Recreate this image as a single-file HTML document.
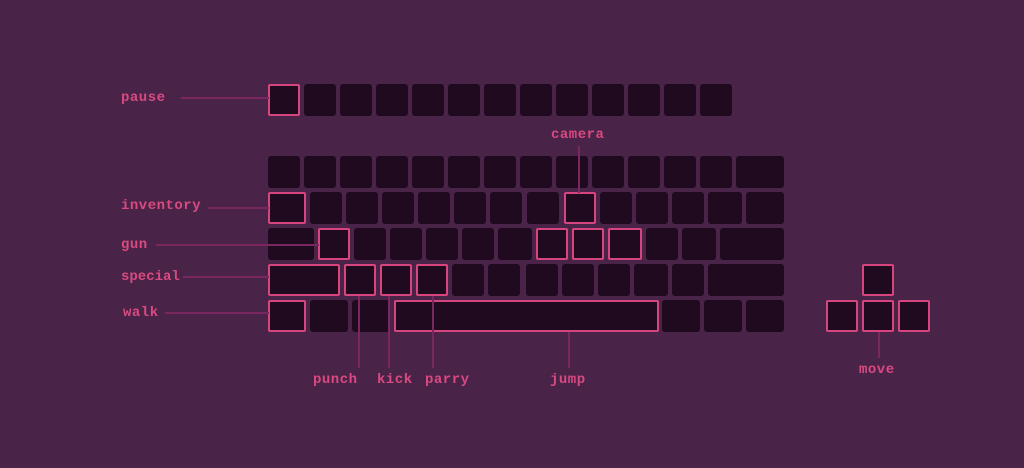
<!DOCTYPE html>
<html><head><meta charset="utf-8"><style>
html,body{margin:0;padding:0}
body{width:1024px;height:468px;background:#4a2349;position:relative;overflow:hidden;font-family:"Liberation Mono","DejaVu Sans Mono",monospace}
.k{position:absolute;height:32px;background:#1f0a20;border-radius:3px;box-sizing:border-box}
.h{border:2px solid #d6457e;border-radius:2px}
.l{position:absolute;background:#7a2760;z-index:2}
.t{position:absolute;color:#d94a80;font-size:14px;line-height:14px;letter-spacing:0.5px;font-weight:bold}
</style></head><body>
<!-- connector lines -->
<div class="l" style="left:181px;top:97px;width:88px;height:2px"></div>
<div class="l" style="left:208px;top:207px;width:61px;height:2px"></div>
<div class="l" style="left:156px;top:244px;width:163px;height:2px"></div>
<div class="l" style="left:183px;top:276px;width:86px;height:2px"></div>
<div class="l" style="left:165px;top:312px;width:104px;height:2px"></div>
<div class="l" style="left:578px;top:146px;width:2px;height:47px"></div>
<div class="l" style="left:358px;top:296px;width:2px;height:72px"></div>
<div class="l" style="left:388px;top:296px;width:2px;height:72px"></div>
<div class="l" style="left:432px;top:296px;width:2px;height:72px"></div>
<div class="l" style="left:568px;top:332px;width:2px;height:36px"></div>
<div class="l" style="left:878px;top:332px;width:2px;height:26px"></div>

<!-- row 0 -->
<div class="k h" style="left:268px;top:84px;width:32px"></div>
<div class="k" style="left:304px;top:84px;width:32px"></div>
<div class="k" style="left:340px;top:84px;width:32px"></div>
<div class="k" style="left:376px;top:84px;width:32px"></div>
<div class="k" style="left:412px;top:84px;width:32px"></div>
<div class="k" style="left:448px;top:84px;width:32px"></div>
<div class="k" style="left:484px;top:84px;width:32px"></div>
<div class="k" style="left:520px;top:84px;width:32px"></div>
<div class="k" style="left:556px;top:84px;width:32px"></div>
<div class="k" style="left:592px;top:84px;width:32px"></div>
<div class="k" style="left:628px;top:84px;width:32px"></div>
<div class="k" style="left:664px;top:84px;width:32px"></div>
<div class="k" style="left:700px;top:84px;width:32px"></div>
<!-- row 1 -->
<div class="k" style="left:268px;top:156px;width:32px"></div>
<div class="k" style="left:304px;top:156px;width:32px"></div>
<div class="k" style="left:340px;top:156px;width:32px"></div>
<div class="k" style="left:376px;top:156px;width:32px"></div>
<div class="k" style="left:412px;top:156px;width:32px"></div>
<div class="k" style="left:448px;top:156px;width:32px"></div>
<div class="k" style="left:484px;top:156px;width:32px"></div>
<div class="k" style="left:520px;top:156px;width:32px"></div>
<div class="k" style="left:556px;top:156px;width:32px"></div>
<div class="k" style="left:592px;top:156px;width:32px"></div>
<div class="k" style="left:628px;top:156px;width:32px"></div>
<div class="k" style="left:664px;top:156px;width:32px"></div>
<div class="k" style="left:700px;top:156px;width:32px"></div>
<div class="k" style="left:736px;top:156px;width:48px"></div>
<!-- row 2 -->
<div class="k h" style="left:268px;top:192px;width:38px"></div>
<div class="k" style="left:310px;top:192px;width:32px"></div>
<div class="k" style="left:346px;top:192px;width:32px"></div>
<div class="k" style="left:382px;top:192px;width:32px"></div>
<div class="k" style="left:418px;top:192px;width:32px"></div>
<div class="k" style="left:454px;top:192px;width:32px"></div>
<div class="k" style="left:490px;top:192px;width:32px"></div>
<div class="k" style="left:527px;top:192px;width:32px"></div>
<div class="k h" style="left:564px;top:192px;width:32px"></div>
<div class="k" style="left:600px;top:192px;width:32px"></div>
<div class="k" style="left:636px;top:192px;width:32px"></div>
<div class="k" style="left:672px;top:192px;width:32px"></div>
<div class="k" style="left:708px;top:192px;width:34px"></div>
<div class="k" style="left:746px;top:192px;width:38px"></div>
<!-- row 3 -->
<div class="k" style="left:268px;top:228px;width:46px"></div>
<div class="k h" style="left:318px;top:228px;width:32px"></div>
<div class="k" style="left:354px;top:228px;width:32px"></div>
<div class="k" style="left:390px;top:228px;width:32px"></div>
<div class="k" style="left:426px;top:228px;width:32px"></div>
<div class="k" style="left:462px;top:228px;width:32px"></div>
<div class="k" style="left:498px;top:228px;width:34px"></div>
<div class="k h" style="left:536px;top:228px;width:32px"></div>
<div class="k h" style="left:572px;top:228px;width:32px"></div>
<div class="k h" style="left:608px;top:228px;width:34px"></div>
<div class="k" style="left:646px;top:228px;width:32px"></div>
<div class="k" style="left:682px;top:228px;width:34px"></div>
<div class="k" style="left:720px;top:228px;width:64px"></div>
<!-- row 4 -->
<div class="k h" style="left:268px;top:264px;width:72px"></div>
<div class="k h" style="left:344px;top:264px;width:32px"></div>
<div class="k h" style="left:380px;top:264px;width:32px"></div>
<div class="k h" style="left:416px;top:264px;width:32px"></div>
<div class="k" style="left:452px;top:264px;width:32px"></div>
<div class="k" style="left:488px;top:264px;width:32px"></div>
<div class="k" style="left:526px;top:264px;width:32px"></div>
<div class="k" style="left:562px;top:264px;width:32px"></div>
<div class="k" style="left:598px;top:264px;width:32px"></div>
<div class="k" style="left:634px;top:264px;width:34px"></div>
<div class="k" style="left:672px;top:264px;width:32px"></div>
<div class="k" style="left:708px;top:264px;width:76px"></div>
<!-- row 5 -->
<div class="k h" style="left:268px;top:300px;width:38px"></div>
<div class="k" style="left:310px;top:300px;width:38px"></div>
<div class="k" style="left:352px;top:300px;width:38px"></div>
<div class="k h" style="left:394px;top:300px;width:265px"></div>
<div class="k" style="left:662px;top:300px;width:38px"></div>
<div class="k" style="left:704px;top:300px;width:38px"></div>
<div class="k" style="left:746px;top:300px;width:38px"></div>
<!-- arrows -->
<div class="k h" style="left:862px;top:264px;width:32px"></div>
<div class="k h" style="left:826px;top:300px;width:32px"></div>
<div class="k h" style="left:862px;top:300px;width:32px"></div>
<div class="k h" style="left:898px;top:300px;width:32px"></div>

<!-- labels -->
<div class="t" style="left:121px;top:91px">pause</div>
<div class="t" style="left:121px;top:199px">inventory</div>
<div class="t" style="left:121px;top:238px">gun</div>
<div class="t" style="left:121px;top:270px;letter-spacing:0">special</div>
<div class="t" style="left:123px;top:306px">walk</div>
<div class="t" style="left:551px;top:128px">camera</div>
<div class="t" style="left:313px;top:373px">punch</div>
<div class="t" style="left:377px;top:373px">kick</div>
<div class="t" style="left:425px;top:373px">parry</div>
<div class="t" style="left:550px;top:373px">jump</div>
<div class="t" style="left:859px;top:363px">move</div>
</body></html>
